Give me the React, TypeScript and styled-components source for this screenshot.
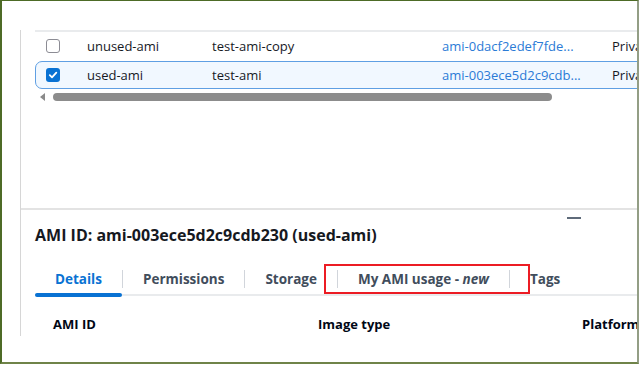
import React from "react";
import styled, { createGlobalStyle } from "styled-components";

const Global = createGlobalStyle`
  html, body { margin: 0; padding: 0; background: #ffffff; }
  body { font-family: "Open Sans", "Noto Sans", sans-serif; color: #000716; }
  * { box-sizing: border-box; }
`;

const Frame = styled.div`
  width: 639px;
  height: 364px;
  border-top: 1px solid #4d6b26;
  border-left: 2px solid #4d6b26;
  border-bottom: 2px solid #6f8348;
  border-right: 2px solid #939e85;
  overflow: hidden;
  background: #ffffff;
`;

const Panel = styled.div`
  margin-left: 18px;
  margin-top: 29px;
  height: 306px;
  border-left: 1px solid #d6d6d6;
  display: flex;
  flex-direction: column;
`;

const TableArea = styled.div`
  height: 178px;
  padding-left: 14px;
  flex: none;
`;

const TableTop = styled.div`
  height: 2px;
  background: #e9ebed;
`;

const Row = styled.div<{ $selected?: boolean }>`
  display: grid;
  grid-template-columns: 40px 125px 230px 170px 100px;
  align-items: center;
  height: 28px;
  width: 700px;
  margin-top: ${(p) => (p.$selected ? "1px" : "0")};
  border: 1px solid ${(p) => (p.$selected ? "#5f9fe3" : "transparent")};
  border-radius: 7px;
  background: ${(p) => (p.$selected ? "#f1f8ff" : "transparent")};
  font-size: 13px;
  white-space: nowrap;
`;

const Cell = styled.div<{ $link?: boolean }>`
  padding-left: 11px;
  color: ${(p) => (p.$link ? "#2b7bd6" : "#16191f")};
  overflow: hidden;
`;

const Check = styled.span<{ $on?: boolean }>`
  display: flex;
  align-items: center;
  justify-content: center;
  margin-left: 10px;
  width: 14px;
  height: 14px;
  border-radius: 3px;
  border: ${(p) => (p.$on ? "none" : "1.5px solid #8c8c94")};
  background: ${(p) => (p.$on ? "#0972d3" : "#ffffff")};
`;

const ScrollRow = styled.div`
  display: flex;
  align-items: center;
  gap: 8px;
  margin-top: 3px;
  padding-left: 5px;
  height: 10px;
`;

const Arrow = styled.span`
  width: 0;
  height: 0;
  border-top: 4px solid transparent;
  border-bottom: 4px solid transparent;
  border-right: 5px solid #8a8a8a;
`;

const Thumb = styled.div`
  width: 499px;
  height: 8px;
  border-radius: 4px;
  background: #8c8c8c;
`;

const Divider = styled.div`
  height: 2px;
  background: #e3e3e3;
  flex: none;
`;

const Details = styled.div`
  padding-left: 14px;
  display: flex;
  flex-direction: column;
`;

const HandleRow = styled.div`
  height: 16px;
  display: flex;
  justify-content: flex-end;
  padding-right: 56px;
  padding-top: 7px;
`;

const Handle = styled.span`
  width: 14px;
  height: 2px;
  background: #5f6b7a;
`;

const Title = styled.h2`
  margin: 0;
  font-size: 16px;
  font-weight: 700;
  line-height: 18px;
  color: #16191f;
`;

const TabsWrap = styled.div`
  position: relative;
  margin-top: 20px;
  border-bottom: 2px solid #e9ebed;
  display: flex;
  height: 32px;
  width: 700px;
`;

const Tab = styled.div<{ $active?: boolean }>`
  position: relative;
  display: flex;
  align-items: center;
  padding: 0 20px;
  font-size: 13.5px;
  font-weight: 700;
  color: ${(p) => (p.$active ? "#0972d3" : "#414d5c")};
  white-space: nowrap;
  &::after {
    content: "";
    position: absolute;
    left: 0;
    right: 0;
    bottom: -3px;
    height: 4px;
    border-radius: 2px;
    background: ${(p) => (p.$active ? "#0972d3" : "transparent")};
  }
`;

const Sep = styled.span`
  align-self: center;
  width: 1px;
  height: 18px;
  background: #d1d5db;
`;

const Highlight = styled.div`
  position: absolute;
  left: 289px;
  top: 0;
  width: 206px;
  height: 30px;
  border: 2px solid #ec1c24;
  pointer-events: none;
`;

const Fields = styled.div`
  display: grid;
  grid-template-columns: 265px 264px 100px;
  padding-left: 18px;
  margin-top: 19px;
  font-size: 13px;
  line-height: 18px;
  font-weight: 700;
  white-space: nowrap;
  color: #000716;
`;

const CheckMark = () => (
  <svg width="10" height="10" viewBox="0 0 10 10">
    <path d="M1.8 5.2 L4 7.3 L8.3 2.6" fill="none" stroke="#fff" strokeWidth="1.8" strokeLinecap="round" strokeLinejoin="round" />
  </svg>
);

export default function App() {
  return (
    <>
      <Global />
      <Frame>
        <Panel>
          <TableArea>
            <TableTop />
            <Row>
              <Check />
              <Cell>unused-ami</Cell>
              <Cell>test-ami-copy</Cell>
              <Cell $link>ami-0dacf2edef7fde...</Cell>
              <Cell>Private</Cell>
            </Row>
            <Row $selected>
              <Check $on>
                <CheckMark />
              </Check>
              <Cell>used-ami</Cell>
              <Cell>test-ami</Cell>
              <Cell $link>ami-003ece5d2c9cdb...</Cell>
              <Cell>Private</Cell>
            </Row>
            <ScrollRow>
              <Arrow />
              <Thumb />
            </ScrollRow>
          </TableArea>
          <Divider />
          <Details>
            <HandleRow>
              <Handle />
            </HandleRow>
            <Title>AMI ID: ami-003ece5d2c9cdb230 (used-ami)</Title>
            <TabsWrap>
              <Tab $active>Details</Tab>
              <Sep />
              <Tab>Permissions</Tab>
              <Sep />
              <Tab>Storage</Tab>
              <Sep />
              <Tab>
                <span>
                  My AMI usage - <i>new</i>
                </span>
              </Tab>
              <Sep />
              <Tab>Tags</Tab>
              <Highlight />
            </TabsWrap>
            <Fields>
              <span>AMI ID</span>
              <span>Image type</span>
              <span>Platform</span>
            </Fields>
          </Details>
        </Panel>
      </Frame>
    </>
  );
}
